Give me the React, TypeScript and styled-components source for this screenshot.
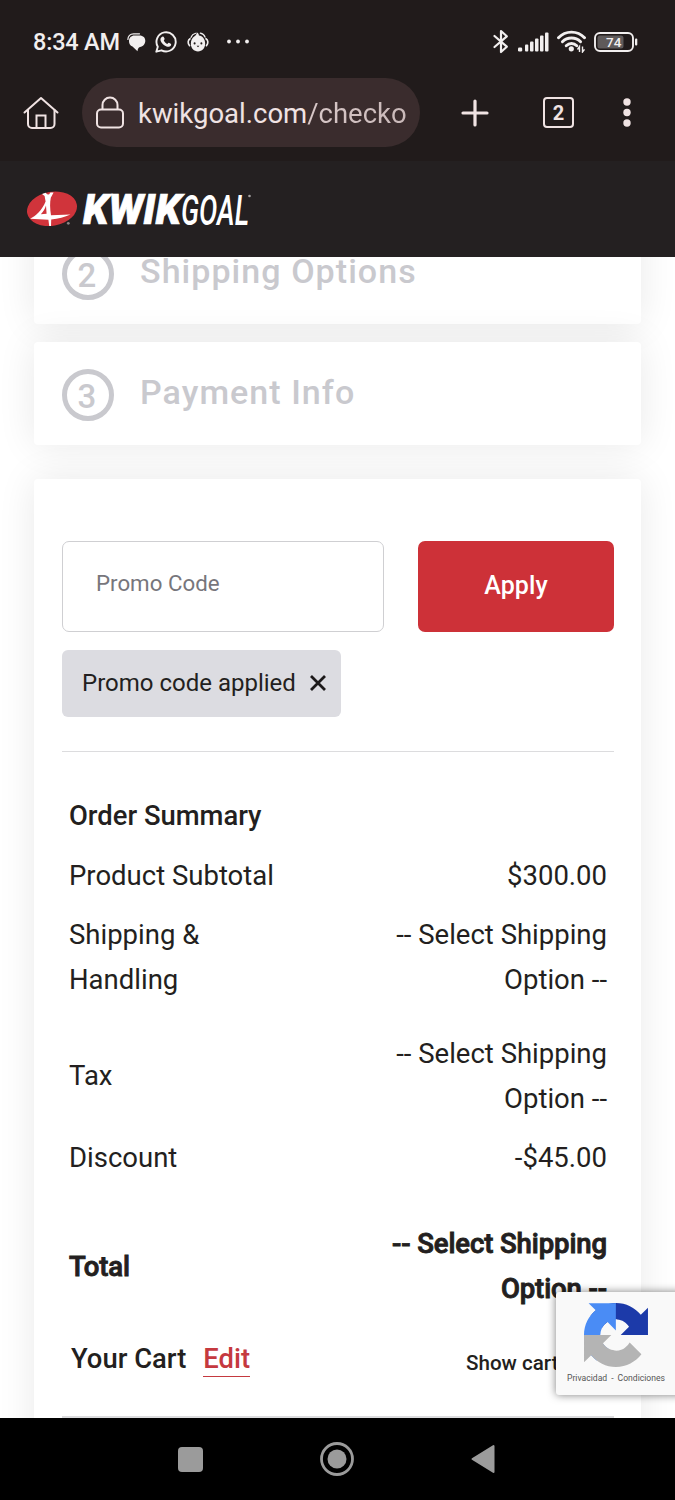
import React from 'react';
import styled, { createGlobalStyle } from 'styled-components';

const GlobalStyle = createGlobalStyle`
  *, *::before, *::after { box-sizing: border-box; }
  body { margin: 0; background: #fff; }
  svg { display: block; flex: none; }
`;

const Phone = styled.div`
  position: relative;
  width: 675px;
  height: 1500px;
  display: flex;
  flex-direction: column;
  overflow: hidden;
  font-family: Roboto, 'Liberation Sans', sans-serif;
  color: #231f20;
`;

const SystemBar = styled.div`
  flex: none;
  height: 78px;
  padding: 5px 37px 0 33px;
  display: flex;
  align-items: center;
  background: #211b1b;
  color: #f2efef;
`;

const Clock = styled.span`
  width: 94px;
  font-size: 23.5px;
  font-weight: 500;
  letter-spacing: -0.2px;
  white-space: nowrap;
`;

const StatusGroup = styled.div<{ $gap: number; $end?: boolean }>`
  display: flex;
  align-items: center;
  gap: ${(p) => p.$gap}px;
  margin-left: ${(p) => (p.$end ? 'auto' : '0')};
`;

const BrowserBar = styled.div`
  flex: none;
  height: 83px;
  padding: 0 40px 14px 23px;
  display: flex;
  align-items: center;
  background: #211b1b;
`;

const AddressPill = styled.div`
  flex: none;
  width: 338px;
  height: 69px;
  margin-left: 23px;
  padding-left: 13px;
  border-radius: 35px;
  display: flex;
  align-items: center;
  gap: 13px;
  background: #3a2c2d;
`;

const Address = styled.span`
  font-size: 27.5px;
  line-height: 36px;
  padding-top: 2px;
  white-space: nowrap;
  color: #f0e3e3;
`;

const AddressPath = styled.span`
  background: linear-gradient(90deg, #d8c8c8, #c9b9b9);
  background-clip: text;
  color: transparent;
`;

const BrowserActions = styled.div`
  flex: 1;
  margin-left: 41px;
  display: flex;
  align-items: center;
`;

const TabCount = styled.div`
  flex: none;
  width: 31px;
  height: 31px;
  margin: 0 49px 0 54px;
  border: 2.5px solid #f0e3e3;
  border-radius: 4px;
  display: flex;
  align-items: center;
  justify-content: center;
  font-size: 20px;
  font-weight: 700;
  color: #f0e3e3;
`;

const SiteHeader = styled.header`
  flex: none;
  position: relative;
  z-index: 1;
  height: 96px;
  padding: 27px 0 0 26px;
  background: #242021;
`;

const Viewport = styled.main`
  flex: 1;
  min-height: 0;
  padding: 0 34px;
  overflow: hidden;
  background: #fff;
`;

const Card = styled.section`
  border-radius: 4px;
  background: #fff;
  box-shadow: 0 0 38px rgba(0, 0, 0, 0.09);
`;

const StepCard = styled(Card)<{ $offset: number; $after: number }>`
  height: 103px;
  margin-top: ${(p) => p.$offset}px;
  margin-bottom: ${(p) => p.$after}px;
  padding: 3px 28px 0;
  display: flex;
  align-items: center;
  gap: 26px;
  color: #c9c9ce;
`;

const StepNumber = styled.span`
  width: 52px;
  height: 52px;
  padding: 2px 2px 0 0;
  border: 5px solid #c9c9ce;
  border-radius: 50%;
  display: flex;
  align-items: center;
  justify-content: center;
  font-size: 33px;
  font-weight: 500;
`;

const StepTitle = styled.h2`
  margin: 0 0 6px;
  font-size: 34px;
  line-height: 44px;
  font-weight: 500;
  letter-spacing: 1.05px;
`;

const SummaryCard = styled(Card)`
  height: 1100px;
  padding: 62px 27px 0 28px;
`;

const PromoForm = styled.div`
  display: flex;
  justify-content: space-between;
`;

const PromoInput = styled.div`
  width: 322px;
  height: 91px;
  padding: 0 0 7px 33px;
  border: 1.5px solid #cfcfd2;
  border-radius: 7px;
  display: flex;
  align-items: center;
  font-size: 22.3px;
  color: #77767c;
`;

const ApplyButton = styled.button`
  width: 196px;
  height: 91px;
  padding: 0 0 3px;
  border: 0;
  border-radius: 7px;
  background: #cd3138;
  color: #fff;
  font-family: inherit;
  font-size: 25px;
  font-weight: 500;
  letter-spacing: 0.1px;
`;

const PromoChip = styled.div`
  width: 279px;
  height: 67px;
  margin: 18px 0 34px;
  padding: 0 15px 1px 20px;
  border-radius: 6px;
  display: flex;
  align-items: center;
  justify-content: space-between;
  background: #dcdce1;
  font-size: 24px;
`;

const Rule = styled.div<{ $thickness: number }>`
  height: ${(p) => p.$thickness}px;
  background: #dcdcde;
`;

const OrderTable = styled.div`
  padding: 35px 7px 0;
  font-size: 27.5px;
  line-height: 45px;
`;

const OrderRow = styled.div<{ $height: number; $centered?: boolean; $bold?: boolean }>`
  height: ${(p) => p.$height}px;
  padding: 7px 0;
  display: flex;
  justify-content: space-between;
  align-items: ${(p) => (p.$centered ? 'center' : 'flex-start')};
  font-weight: ${(p) => (p.$bold ? 500 : 400)};
  letter-spacing: ${(p) => (p.$bold ? '-0.1px' : '0')};
  -webkit-text-stroke: ${(p) => (p.$bold ? '0.9px #231f20' : '0')};
`;

const OrderHeading = styled.h3`
  margin: 0;
  font-size: 27.4px;
  font-weight: 500;
`;

const Label = styled.span`
  width: 180px;
  white-space: pre-line;
`;

const WideLabel = styled(Label)`
  width: 260px;
`;

const Amount = styled.span`
  text-align: right;
  white-space: pre-line;
`;

const CartBar = styled.div`
  height: 98px;
  padding: 23px 7px 0 9px;
  display: flex;
  align-items: flex-start;
  font-weight: 500;
  line-height: 36px;
`;

const CartTitle = styled.span`
  font-size: 27.4px;
`;

const EditLink = styled.a`
  margin-left: 17px;
  font-size: 27.4px;
  line-height: 34px;
  padding-top: 1px;
  border-bottom: 1.5px solid #c5393f;
  color: #c5393f;
`;

const ShowCart = styled.span`
  margin: 4px 0 0 216px;
  font-size: 20.6px;
  white-space: nowrap;
`;

const CaptchaBadge = styled.aside`
  position: absolute;
  z-index: 2;
  left: 556px;
  top: 1292px;
  width: 130px;
  height: 103px;
  padding: 11px 0 0 11px;
  border-radius: 3px;
  background: #f9f9f9;
  box-shadow: 0 0 8px rgba(0, 0, 0, 0.5);
`;

const CaptchaText = styled.div`
  width: 98px;
  margin-top: 5px;
  display: flex;
  justify-content: space-between;
  font-size: 8.6px;
  line-height: 12px;
  white-space: nowrap;
  color: #555;
`;

const CaptchaLogo = styled.svg`
  margin-left: 17px;
`;

const NavBar = styled.nav`
  flex: none;
  position: relative;
  height: 82px;
  padding: 0 180px 0 178px;
  display: flex;
  align-items: center;
  justify-content: space-between;
  background: #000;
`;

const light = '#f2efef';
const pale = '#f0e3e3';

const ChatIcon = () => (
  <svg width="19" height="20" viewBox="0 0 19 20">
    <path d="M.9 7.500C.9 4 3.200 1.800 6.500 1.800h6" fill="none" stroke={light} strokeWidth="1.200" strokeLinecap="round" />
    <path d="M7.500 3.500h5C16.300 3.500 18.300 5.800 18.300 8.800c0 3.400-2.300 5.800-5.300 6.200-1.600.3-2.300 2.300-2.500 4.200L5.500 14.600C3.200 13.500 2 11.700 2 9.200 2 5.800 4.200 3.500 7.500 3.500z" fill={light} />
  </svg>
);

const WhatsAppIcon = () => (
  <svg width="22" height="22" viewBox="0 0 22 22">
    <path d="M1.300 20.700l1.500-5A9.600 9.600 0 1 1 6.500 19.300z" fill="none" stroke={light} strokeWidth="1.900" strokeLinejoin="round" />
    <path d="M7.300 5.700c.7-.4 1.300-.2 1.600.5l.7 1.600c.2.6-.9 1.400-.8 1.800.6 1.400 1.900 2.600 3.300 3.300.6.100 1.200-1.300 1.800-1.100l1.800.9c.6.300.6 1.200 0 2-.9 1.200-2.600 1.400-4.200.8-2.600-1-4.800-3-5.800-5.500-.6-1.700-.2-3.400 1.600-4.300z" fill={light} />
  </svg>
);

const MascotIcon = () => (
  <svg width="22" height="22" viewBox="0 0 24 23">
    <path d="M2.800 15.500C.4 12.500 1 9.500 3.300 8M21.200 15.500c2.400-3 1.800-6-.5-7.500" fill="none" stroke={light} strokeWidth="1.800" strokeLinecap="round" />
    <path d="M4.300 6.500C5.300 4 7.500 2.500 9.500 2M14.500 1.800c2.800.6 4.400 2 5.300 4.500" fill="none" stroke={light} strokeWidth="1.300" strokeLinecap="round" />
    <path d="M10.500.8c2 .9 2.500 2.200 2.500 3.700C17 5 19.800 8.500 19.800 13.500c0 5-3.400 8.300-7.800 8.300s-7.800-3.300-7.800-8.300c0-4 1.600-6.500 4-8.200C9.800 4.200 10.800 2.600 10.500.8z" fill={light} />
    <circle cx="8.300" cy="13" r="1.100" fill="#211b1b" />
    <circle cx="15.700" cy="13" r="1.100" fill="#211b1b" />
    <path d="M10.500 15.500h3L12 17.200z" fill="#211b1b" />
  </svg>
);

const MoreDots = () => (
  <svg width="22" height="5" viewBox="0 0 22 5" fill={light}>
    <circle cx="2" cy="2.500" r="1.900" />
    <circle cx="11" cy="2.500" r="1.900" />
    <circle cx="20" cy="2.500" r="1.900" />
  </svg>
);

const BluetoothIcon = () => (
  <svg width="16" height="25" viewBox="0 0 16 25">
    <path d="M1.500 7l12.300 10.700L8 23V2l5.800 5.300L1.500 18" fill="none" stroke={light} strokeWidth="2.200" strokeLinejoin="round" strokeLinecap="round" />
  </svg>
);

const SignalIcon = () => (
  <svg width="31" height="20" viewBox="0 0 31 20" fill={light}>
    <rect x="0" y="15.500" width="4.200" height="4" rx="1.300" />
    <rect x="7" y="12.500" width="3.300" height="7" rx="1" />
    <rect x="12" y="9.500" width="3.500" height="10" rx="1" />
    <rect x="17" y="6.500" width="3.500" height="13" rx="1" />
    <rect x="22" y="3.500" width="3.500" height="16" rx="1" />
    <rect x="27" y="0.500" width="3.500" height="19" rx="1" />
  </svg>
);

const WifiIcon = () => (
  <svg width="29" height="23" viewBox="0 0 29 23">
    <g fill="none" stroke={light} strokeWidth="2.900" strokeLinecap="round">
      <path d="M1.500 7.800C8.500.2 20.500.2 27.500 7.800" />
      <path d="M5.400 11.800c5-5 13.200-5 18.200 0" />
      <path d="M9.200 15.700c3-2.900 7.600-2.900 10.600 0" />
    </g>
    <circle cx="14.300" cy="18.800" r="2.600" fill={light} />
    <path d="M22.500 22v-5.500l-2 3M25.500 16.500V22l2-2.700" fill="none" stroke={light} strokeWidth="1.400" />
  </svg>
);

const BatteryIcon = () => (
  <svg width="44" height="20" viewBox="0 0 44 20">
    <rect x="3.500" y="3.500" width="26" height="13" rx="2.500" fill="#5f5a5a" />
    <rect x="1" y="1" width="38" height="18" rx="5" fill="none" stroke={light} strokeWidth="1.900" />
    <rect x="41" y="6.500" width="2.300" height="7" rx="1" fill={light} />
    <text x="19.700" y="14.800" textAnchor="middle" fontFamily="Roboto" fontSize="13.500" fontWeight="500" fill={light}>74</text>
  </svg>
);

const HomeIcon = () => (
  <svg width="36" height="33" viewBox="0 0 36 33" fill="none" stroke={pale} strokeWidth="2" strokeLinejoin="round" strokeLinecap="round">
    <path d="M1.500 16.500L18 2l16.500 14.500" />
    <path d="M5 14v14a4 4 0 0 0 4 4h18.500a4 4 0 0 0 4-4V14" />
    <path d="M13.500 31.500V19.500h9v12" strokeLinejoin="miter" />
  </svg>
);

const LockIcon = () => (
  <svg width="30" height="33" viewBox="0 0 30 33" fill="none" stroke={pale} strokeWidth="2">
    <rect x="2" y="13.500" width="26" height="18" rx="4" />
    <path d="M7.500 13.500V9a7.500 7.500 0 0 1 15 0v4.500" />
  </svg>
);

const PlusIcon = () => (
  <svg width="28" height="28" viewBox="0 0 28 28" stroke={pale} strokeWidth="3.200" strokeLinecap="round">
    <path d="M14 2v24M2 14h24" />
  </svg>
);

const KebabIcon = () => (
  <svg width="8" height="29" viewBox="0 0 8 29" fill={pale}>
    <circle cx="4" cy="4" r="3.700" />
    <circle cx="4" cy="14.500" r="3.700" />
    <circle cx="4" cy="25" r="3.700" />
  </svg>
);

const Logo = () => (
  <svg width="240" height="56" viewBox="0 0 240 56" fontFamily="Roboto" fill="#fff">
    <ellipse cx="26" cy="20.800" rx="25.200" ry="17" transform="rotate(-10 26 20.800)" fill="#d0343b" />
    <path d="M16 6l3.800-1.300 1.200 1.500 2 .2 1.400-2 3.200.200-2.800 5.200c-1 4.500-.9 10.500.2 17.400L44.500 26.500c-6 2.600-12 4.200-19.300 5l-.2 6.500h-1.800l-.8-6.300-18.200-1C9.500 28 16 22.500 19.600 13.500L18.600 8z" />
    <path d="M20 17.500l.6 8.300-5.800.5c2.500-2.600 4.100-5.300 5.200-8.800z" fill="#d0343b" />
    <circle cx="42.300" cy="35.300" r="1.400" fill="#8b8586" />
    <text x="57" y="36.300" fontSize="42.500" fontWeight="900" fontStyle="italic" textLength="98" lengthAdjust="spacingAndGlyphs" stroke="#fff" strokeWidth="0.700">KWIK</text>
    <text x="155" y="36.500" fontSize="43" fontWeight="500" fontStyle="italic" textLength="68" lengthAdjust="spacingAndGlyphs">GOAL</text>
    <circle cx="223.500" cy="8" r="1.300" fill="#a5a0a1" />
  </svg>
);

const CloseIcon = () => (
  <svg width="16" height="16" viewBox="0 0 16 16" stroke="#1c191a" strokeWidth="2.800">
    <path d="M1 1l14 14M15 1L1 15" />
  </svg>
);

const RecaptchaLogo = () => (
  <CaptchaLogo width="64" height="64" viewBox="0 0 64 64">
    <path fill="#1c3aa9" d="M64 31.955l-.033-1.370V4.687l-7.160 7.160C50.948 4.674 42.033.093 32.050.093c-10.400 0-19.622 4.960-25.458 12.640l11.736 11.860a15.550 15.550 0 0 1 4.754-5.334c2.050-1.600 4.952-2.906 8.968-2.906.485 0 .860.057 1.135.163 4.976.393 9.288 3.140 11.828 7.124l-8.307 8.307L64 31.953" />
    <path fill="#4a8cf5" d="M31.862.094l-1.370.033H4.594l7.160 7.160C4.580 13.147 0 22.060 0 32.046c0 10.400 4.960 19.622 12.640 25.458L24.500 45.768a15.550 15.550 0 0 1-5.334-4.754c-1.600-2.050-2.906-4.952-2.906-8.968 0-.485.057-.860.163-1.135.393-4.976 3.140-9.288 7.124-11.828l8.307 8.307L31.860.095" />
    <path fill="#b4b4b4" d="M.001 32.045l.033 1.370v25.898l7.160-7.160c5.860 7.173 14.774 11.754 24.760 11.754 10.400 0 19.622-4.960 25.458-12.640l-11.736-11.860a15.550 15.550 0 0 1-4.754 5.334c-2.050 1.600-4.952 2.906-8.968 2.906-.485 0-.860-.057-1.135-.163-4.976-.393-9.288-3.140-11.828-7.124l8.307-8.307L0 32.045" />
  </CaptchaLogo>
);

const shippingPrompt = '-- Select Shipping\nOption --';

export default function App() {
  return (
    <>
      <GlobalStyle />
      <Phone>
        <SystemBar>
          <Clock>8:34 AM</Clock>
          <StatusGroup $gap={9.3}>
            <ChatIcon />
            <WhatsAppIcon />
            <MascotIcon />
            <span />
            <MoreDots />
          </StatusGroup>
          <StatusGroup $gap={8.2} $end>
            <BluetoothIcon />
            <SignalIcon />
            <WifiIcon />
            <BatteryIcon />
          </StatusGroup>
        </SystemBar>
        <BrowserBar>
          <HomeIcon />
          <AddressPill>
            <LockIcon />
            <Address>
              kwikgoal.com<AddressPath>/checko</AddressPath>
            </Address>
          </AddressPill>
          <BrowserActions>
            <PlusIcon />
            <TabCount>2</TabCount>
            <KebabIcon />
          </BrowserActions>
        </BrowserBar>
        <SiteHeader>
          <Logo />
        </SiteHeader>
        <Viewport>
          <StepCard $offset={-36} $after={18}>
            <StepNumber>2</StepNumber>
            <StepTitle>Shipping Options</StepTitle>
          </StepCard>
          <StepCard $offset={0} $after={34}>
            <StepNumber>3</StepNumber>
            <StepTitle>Payment Info</StepTitle>
          </StepCard>
          <SummaryCard>
            <PromoForm>
              <PromoInput>Promo Code</PromoInput>
              <ApplyButton>Apply</ApplyButton>
            </PromoForm>
            <PromoChip>
              Promo code applied
              <CloseIcon />
            </PromoChip>
            <Rule $thickness={1} />
            <OrderTable>
              <OrderRow $height={59}>
                <OrderHeading>Order Summary</OrderHeading>
              </OrderRow>
              <OrderRow $height={59}>
                <WideLabel>Product Subtotal</WideLabel>
                <Amount>$300.00</Amount>
              </OrderRow>
              <OrderRow $height={118}>
                <Label>{'Shipping &\nHandling'}</Label>
                <Amount>{shippingPrompt}</Amount>
              </OrderRow>
              <OrderRow $height={105} $centered>
                <Label>Tax</Label>
                <Amount>{shippingPrompt}</Amount>
              </OrderRow>
              <OrderRow $height={86}>
                <Label>Discount</Label>
                <Amount>-$45.00</Amount>
              </OrderRow>
              <OrderRow $height={104} $centered $bold>
                <Label>Total</Label>
                <Amount>{shippingPrompt}</Amount>
              </OrderRow>
            </OrderTable>
            <CartBar>
              <CartTitle>Your Cart</CartTitle>
              <EditLink>Edit</EditLink>
              <ShowCart>Show cart</ShowCart>
            </CartBar>
            <Rule $thickness={3} />
          </SummaryCard>
        </Viewport>
        <CaptchaBadge>
          <RecaptchaLogo />
          <CaptchaText>
            <span>Privacidad</span>
            <span>-</span>
            <span>Condiciones</span>
          </CaptchaText>
        </CaptchaBadge>
        <NavBar>
          <svg width="25" height="25" viewBox="0 0 25 25">
            <rect width="25" height="25" rx="4" fill="#9b9b9b" />
          </svg>
          <svg width="34" height="34" viewBox="0 0 34 34">
            <circle cx="17" cy="17" r="15.500" fill="none" stroke="#9b9b9b" strokeWidth="2.800" />
            <circle cx="17" cy="17" r="9.500" fill="#9b9b9b" />
          </svg>
          <svg width="24" height="30" viewBox="0 0 24 30">
            <path d="M1.500 15L22.500 2v26z" fill="#9b9b9b" stroke="#9b9b9b" strokeWidth="2" strokeLinejoin="round" />
          </svg>
        </NavBar>
      </Phone>
    </>
  );
}
